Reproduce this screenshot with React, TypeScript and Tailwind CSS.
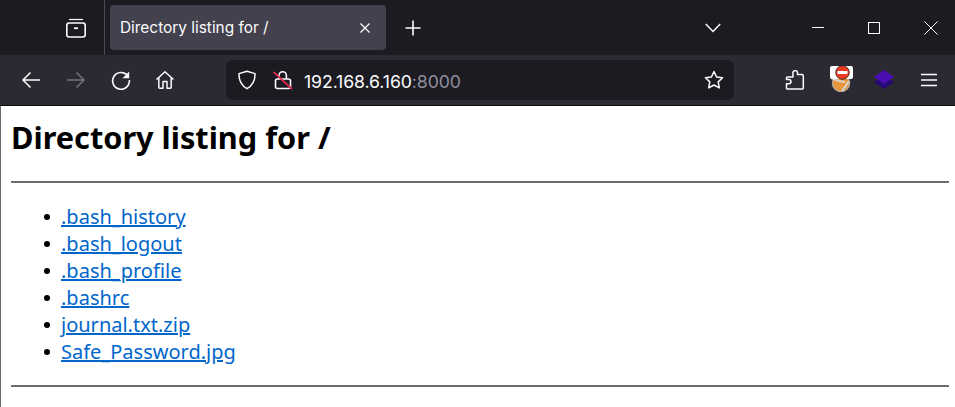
import React from "react";

const ic = "fill-none stroke-current";

function Files() {
  return (
    <svg width="24" height="24" viewBox="0 0 24 24" className={ic + " text-[#fbfbfe]"} strokeWidth="1.6">
      <path d="M5 3.5h14" strokeWidth="1.2" />
      <rect x="2.8" y="7" width="18.4" height="14" rx="2.4" />
      <path d="M10 12.2h4" strokeWidth="1.8" />
    </svg>
  );
}

function Lock() {
  return (
    <svg width="20" height="22" viewBox="0 0 20 22" className="fill-none">
      <path d="M6 10V6.500a3.700 3.700 0 0 1 7.400 0V10" stroke="#fbfbfe" strokeWidth="1.6" />
      <rect x="2.500" y="10" width="15" height="9.500" rx="2" stroke="#fbfbfe" strokeWidth="1.6" />
      <path d="M0.500 3L19 20" stroke="#e22850" strokeWidth="1.7" />
    </svg>
  );
}

function Shield() {
  return (
    <svg width="20" height="20" viewBox="0 0 20 20" className="fill-none stroke-[#fbfbfe]" strokeWidth="1.500">
      <path d="M10 1.300L18 3.600c.3 7.200-2.400 12-8 15.100C4.400 15.600 1.700 10.800 2 3.600z" strokeLinejoin="round" />
    </svg>
  );
}

function Puzzle() {
  return (
    <svg width="20" height="20" viewBox="0 0 20 20" className="fill-none stroke-[#fbfbfe]" strokeWidth="1.500" strokeLinejoin="round">
      <path d="M8 3.500a2.200 2.200 0 0 1 4.400-1.200c.4.600.2 1.400 0 2.200h4.600c.8 0 1.300.6 1.300 1.300v12.200c0 .6-.5 1-1 1H2.600c-.7 0-1.100-.5-1.100-1.100v-4.100h2.300a2.200 2.200 0 0 0 0-4.400H1.500V8c0-.6.5-1 1-1H8z" />
    </svg>
  );
}

function Blocker() {
  return (
    <svg width="26" height="26" viewBox="0 0 26 26" className="block">
      <circle cx="13" cy="17" r="8.500" fill="#e8963a" stroke="#b9a994" strokeWidth="1.500" />
      <path d="M3 12l8 3 6 1M14 25l7-10" stroke="#d9d4cc" strokeWidth="2" fill="none" />
      <rect x="2" y="0" width="23" height="13" rx="2" fill="#ffffff" />
      <circle cx="14.500" cy="6.500" r="6.800" fill="#ee3b24" stroke="#2a1512" strokeWidth="0.800" />
      <rect x="9.500" y="5" width="10" height="3" fill="#ffffff" />
    </svg>
  );
}

function Layers() {
  return (
    <svg width="22" height="20" viewBox="0 0 22 20">
      <path d="M11 6L21 12 11 19 1 12z" fill="#230a78" />
      <path d="M11 0L21 7 11 14 1 7z" fill="#4a0db0" />
    </svg>
  );
}

function Btn({ children, w = "w-[44px]" }: { children: React.ReactNode; w?: string }) {
  return <div className={"flex h-[50px] shrink-0 items-center justify-center " + w}>{children}</div>;
}

const links = [".bash_history", ".bash_logout", ".bash_profile", ".bashrc", "journal.txt.zip", "Safe_Password.jpg"];

export default function App() {
  return (
    <div className="flex h-[407px] w-[955px] flex-col overflow-hidden bg-white font-['Noto_Sans',sans-serif]">
      {/* tab strip */}
      <div className="flex h-[55px] shrink-0 items-center bg-[#1c1b22] text-[#fbfbfe]">
        <div className="flex h-full w-[105px] shrink-0 items-center justify-end border-r border-[#4a4a52] pr-[16px]">
          <Files />
        </div>
        <div className="ml-[5px] flex h-[45px] w-[276px] shrink-0 items-center justify-between rounded bg-[#42414d] pl-[10px] pr-[15px] font-['Inter',sans-serif] text-[15.400px]">
          <span>Directory listing for /</span>
          <svg width="12" height="12" viewBox="0 0 12 12" className={ic} strokeWidth="1.300">
            <path d="M1.500 1.500l9 9M10.500 1.500l-9 9" />
          </svg>
        </div>
        <div className="ml-[19px] flex w-[16px] shrink-0 justify-center">
          <svg width="16" height="16" viewBox="0 0 16 16" className={ic} strokeWidth="1.600">
            <path d="M8 .5v15M.5 8h15" />
          </svg>
        </div>
        <div className="ml-[284px] shrink-0">
          <svg width="16" height="10" viewBox="0 0 16 10" className={ic} strokeWidth="1.500">
            <path d="M.8 1l7.200 7.500L15.200 1" />
          </svg>
        </div>
        <div className="ml-[91px] h-px w-[12px] shrink-0 bg-[#fbfbfe]" />
        <div className="ml-[44px] h-[12px] w-[12px] shrink-0 border border-[#fbfbfe]" />
        <svg width="14" height="14" viewBox="0 0 14 14" className={ic + " ml-[44px] shrink-0"} strokeWidth="1">
          <path d="M.5.5l13 13M13.500.5l-13 13" />
        </svg>
      </div>

      {/* toolbar */}
      <div className="flex h-[50px] shrink-0 items-center bg-[#2b2a33] text-[#fbfbfe]">
        <div className="ml-[9px] flex items-center">
          <Btn>
            <svg width="20" height="20" viewBox="0 0 20 20" className={ic} strokeWidth="1.500">
              <path d="M19 10H2M9.500 2.500L2 10l7.500 7.500" />
            </svg>
          </Btn>
          <Btn w="w-[46px]">
            <svg width="20" height="20" viewBox="0 0 20 20" className={ic + " text-[#74737b]"} strokeWidth="1.500">
              <path d="M1 10h17M10.500 2.500L18 10l-7.500 7.500" />
            </svg>
          </Btn>
          <Btn>
            <svg width="20" height="20" viewBox="0 0 20 20" className={ic} strokeWidth="1.600">
              <path d="M16.500 5.500A8.400 8.400 0 1 0 18.400 10" />
              <path d="M18.200 1.500v6.700h-6.700z" fill="currentColor" stroke="none" />
            </svg>
          </Btn>
          <Btn>
            <svg width="20" height="20" viewBox="0 0 20 20" className={ic} strokeWidth="1.500" strokeLinejoin="round">
              <path d="M1.500 9.500L10 1.800l8.500 7.700M3.800 8v9.300c0 .6.400 1 1 1H8v-6.800h4v6.800h3.200c.6 0 1-.4 1-1V8" />
            </svg>
          </Btn>
        </div>
        <div className="ml-[39px] flex h-[40px] w-[508px] shrink-0 items-center rounded-md bg-[#1c1b22] pl-[11px] pr-[10px]">
          <Shield />
          <div className="ml-[16px]"><Lock /></div>
          <span className="ml-[11px] pt-[3px] font-['Inter',sans-serif] text-[17.700px] leading-none tracking-[-0.100px]">
            192.168.6.160<span className="text-[#8f8f9d]">:8000</span>
          </span>
          <svg width="20" height="20" viewBox="0 0 20 20" className="ml-auto fill-none stroke-[#fbfbfe]" strokeWidth="1.500" strokeLinejoin="round">
            <path d="M10 1.500l2.600 5.500 6 .8-4.400 4.100 1.100 6L10 15l-5.300 2.900 1.100-6L1.400 7.800l6-.8z" />
          </svg>
        </div>
        <div className="ml-[51px] shrink-0"><Puzzle /></div>
        <div className="mb-[3px] ml-[23px] shrink-0"><Blocker /></div>
        <div className="ml-[19px] shrink-0"><Layers /></div>
        <svg width="16" height="14" viewBox="0 0 16 14" className={ic + " ml-[26px] shrink-0"} strokeWidth="1.500">
          <path d="M0 1.500h16M0 7h16M0 12.500h16" />
        </svg>
      </div>
      <div className="h-px shrink-0 bg-[#0c0c0d]" />

      {/* document */}
      <div className="flex-1 overflow-hidden border-l border-[#6a6a6a] pl-[10px] pr-[6px] font-['Noto_Sans',sans-serif] text-[20px] text-black">
        <h1 className="mt-[11px] text-[30.700px] font-bold leading-[40px]">Directory listing for /</h1>
        <div className="mt-[24px] h-[2px] bg-[#6b6b6b]" />
        <ul className="mt-[20px] pl-[50px] leading-[27px]">
          {links.map((l) => (
            <li key={l} className="flex items-center">
              <span className="ml-[-17px] mr-[11px] h-[6px] w-[6px] shrink-0 rounded-full bg-black" />
              <a className="text-[#0066cc] underline" href="#">{l}</a>
            </li>
          ))}
        </ul>
        <div className="mt-[20px] h-[2px] bg-[#6b6b6b]" />
      </div>
    </div>
  );
}
